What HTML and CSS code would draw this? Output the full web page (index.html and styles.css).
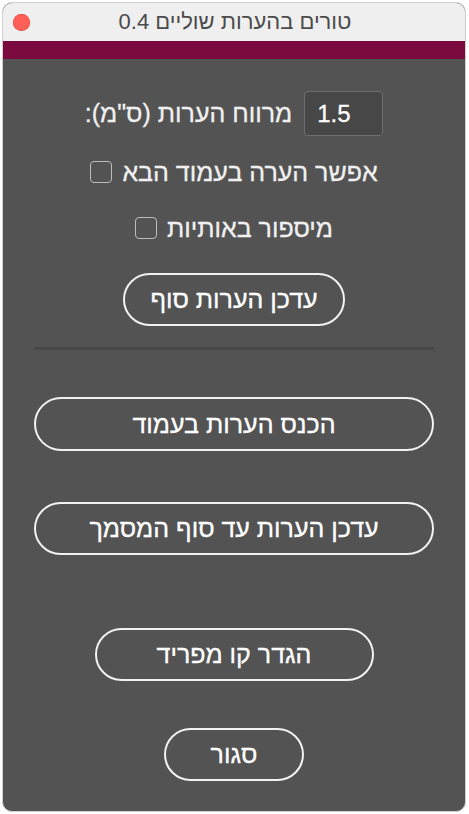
FILE: index.html
```html
<!DOCTYPE html>
<html lang="he">
<head>
	<meta charset="utf-8">
	<title>טורים בהערות שוליים 0.4</title>
	<link rel="stylesheet" href="styles.css">
</head>
<body>
	<div class="window">
		<!-- title bar -->
		<div class="titlebar">
			<span class="close"></span>
			<span class="title">טורים בהערות שוליים 0.4</span>
		</div>
		<div class="accent"></div>

		<!-- dialog content -->
		<main class="panel" dir="rtl">
			<div class="row spacing">
				<input class="field" type="text" value="1.5" dir="ltr">
				<label class="label">מרווח הערות (ס"מ):</label>
			</div>

			<label class="row check check-next">
				<span class="label">אפשר הערה בעמוד הבא</span>
				<input class="box" type="checkbox">
			</label>

			<label class="row check check-letters">
				<span class="label">מיספור באותיות</span>
				<input class="box" type="checkbox">
			</label>

			<button class="btn btn-update">עדכן הערות סוף</button>

			<hr class="divider">

			<button class="btn btn-wide btn-insert">הכנס הערות בעמוד</button>
			<button class="btn btn-wide btn-update-all">עדכן הערות עד סוף המסמך</button>
			<button class="btn btn-line">הגדר קו מפריד</button>
			<button class="btn btn-close">סגור</button>
		</main>
	</div>
</body>
</html>
```

FILE: styles.css
```css
html, body {
	margin: 0;
	padding: 0;
	background: #ffffff;
}
body {
	padding: 2px 2px 2px 2px;
	font-family: "Liberation Sans", "DejaVu Sans", sans-serif;
}

.window {
	width: 462px;
	height: 808px;
	border: 1px solid #cfcfcf;
	border-radius: 10px;
	overflow: hidden;
	background: #535353;
	display: flex;
	flex-direction: column;
}

/* title bar */
.titlebar {
	height: 38px;
	background: #efefef;
	position: relative;
	display: flex;
	align-items: center;
	justify-content: center;
}
.close {
	position: absolute;
	left: 10px;
	top: 11px;
	width: 17px;
	height: 17px;
	border-radius: 50%;
	background: #fe5f57;
	box-shadow: inset 0 0 0 0.5px #e2463f;
}
.title {
	font-size: 22px;
	color: #4b4b4b;
	margin-left: 2px;
}
.accent {
	height: 18px;
	background: #7b0a3e;
}

/* content */
.panel {
	display: flex;
	flex-direction: column;
	align-items: center;
	color: #f0f0f0;
	font-size: 25px;
	-webkit-text-stroke: 0.3px currentColor;
}
.row {
	display: flex;
	align-items: center;
}
.spacing {
	margin-top: 32px;
	gap: 12px;
}
.field {
	width: 79px;
	height: 45px;
	box-sizing: border-box;
	border: 1.5px solid #6e6e6e;
	border-radius: 4px;
	background: #474747;
	color: #ffffff;
	font-family: inherit;
	font-size: 24px;
	padding: 0 12px;
	text-align: left;
	outline: none;
	-webkit-text-stroke: 0.3px #ffffff;
}
.check {
	height: 24px;
	gap: 10px;
	cursor: pointer;
}
.check-next {
	margin-top: 24px;
}
.check-letters {
	margin-top: 32px;
}
.box {
	appearance: none;
	-webkit-appearance: none;
	margin: 0;
	width: 22px;
	height: 22px;
	border: 1.5px solid #bdbdbd;
	border-radius: 4px;
	background: transparent;
}

/* buttons */
.btn {
	height: 53px;
	box-sizing: border-box;
	border: 2px solid #f2f2f2;
	border-radius: 27px;
	background: transparent;
	color: #ffffff;
	font-family: inherit;
	font-size: 25px;
	padding: 0;
	cursor: pointer;
	-webkit-text-stroke: 0.3px #ffffff;
}
.btn-update {
	width: 222px;
	margin-top: 33px;
}
.btn-wide {
	width: 400px;
}
.btn-insert {
	margin-top: 47px;
	height: 54px;
}
.btn-update-all {
	margin-top: 51px;
}
.btn-line {
	width: 279px;
	margin-top: 73px;
}
.btn-close {
	width: 140px;
	margin-top: 47px;
}

.divider {
	width: 400px;
	height: 3px;
	margin: 21px 0 0 0;
	border: none;
	background: #474747;
}
```
